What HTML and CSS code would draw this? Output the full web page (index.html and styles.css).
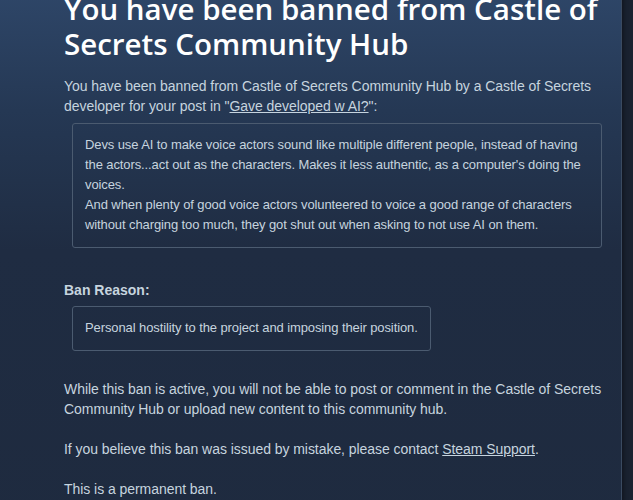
FILE: index.html
```html
<!DOCTYPE html>
<html lang="en">
<head>
    <meta charset="UTF-8">
    <meta name="viewport" content="width=device-width, initial-scale=1.0">
    <title>Banned</title>
    <link rel="stylesheet" href="styles.css">
</head>
<body>

    <div class="page">
        <div class="panel">
            <h1>You have been banned from Castle of Secrets Community Hub</h1>

            <p class="intro">You have been banned from Castle of Secrets Community Hub by a Castle of Secrets developer for your post in "<a href="#">Gave developed w AI?</a>":</p>

            <div class="quote">
                Devs use AI to make voice actors sound like multiple different people, instead of having<br>
                the actors...act out as the characters. Makes it less authentic, as a computer's doing the voices.<br>
                And when plenty of good voice actors volunteered to voice a good range of characters without charging too much, they got shut out when asking to not use AI on them.
            </div>

            <div class="reason-label">Ban Reason:</div>
            <div class="quote reason">Personal hostility to the project and imposing their position.</div>

            <p>While this ban is active, you will not be able to post or comment in the Castle of Secrets Community Hub or upload new content to this community hub.</p>

            <p>If you believe this ban was issued by mistake, please contact <a href="#">Steam Support</a>.</p>

            <p>This is a permanent ban.</p>
        </div>
    </div>

</body>
</html>
```

FILE: styles.css
```css
body {
    margin: 0;
    padding: 0;
    background-color: #1a2230;
    font-family: "Liberation Sans", Arial, sans-serif;
    font-size: 14px;
    color: #c6d4df;
    overflow: hidden;
}

.page {
    width: 622px;
}

.panel {
    background: linear-gradient(to bottom, #2e4668 0%, #253854 120px, #1f2c42 260px, #1e2a3e 100%);
    border-right: 1px solid #3a4a60;
    box-shadow: 2px 0 4px rgba(0, 0, 0, 0.35);
    padding: 0 8px 40px 64px;
    min-height: 600px;
}

h1 {
    margin: -9px 0 0 0;
    padding: 0;
    font-family: "Open Sans", "Noto Sans", sans-serif;
    font-weight: 600;
    font-size: 29.5px;
    line-height: 35px;
    color: #ffffff;
    max-width: 540px;
}

p {
    margin: 0 0 20px 0;
    line-height: 20px;
    letter-spacing: -0.05px;
}

.intro {
    margin-top: 15px;
    margin-bottom: 0;
    max-width: 535px;
}

a {
    color: #c6d4df;
    text-decoration: underline;
}

.quote {
    margin: 7px 0 0 8px;
    padding: 11px 8px 12px 12px;
    border: 1px solid #4b5b70;
    border-radius: 3px;
    line-height: 20px;
    font-size: 13px;
    letter-spacing: -0.1px;
    color: #c6d4df;
    width: 508px;
}

.reason-label {
    margin-top: 32px;
    font-weight: bold;
    line-height: 20px;
}

.quote.reason {
    display: inline-block;
    width: auto;
    margin-top: 6px;
    margin-bottom: 28px;
    padding-right: 12px;
}
```
